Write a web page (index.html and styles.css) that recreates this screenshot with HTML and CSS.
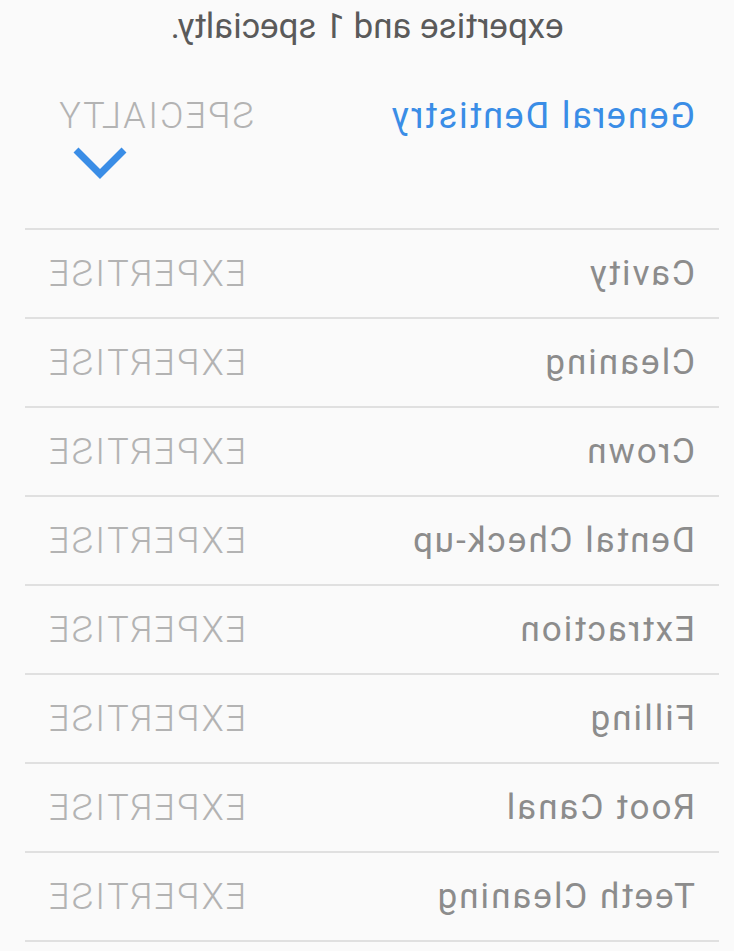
FILE: index.html
```html
<!DOCTYPE html>
<html lang="en">
<head>
    <meta charset="UTF-8">
    <meta name="viewport" content="width=device-width, initial-scale=1.0">
    <title>Expertise</title>
    <link rel="stylesheet" href="styles.css">
</head>
<body>
    <div class="page">
        <p class="intro">expertise and 1 specialty.</p>

        <div class="specialty">
            <span class="specialty-name">General Dentistry</span>
            <div class="specialty-tag">
                <span class="tag">SPECIALTY</span>
                <svg class="chevron" width="56" height="34" viewBox="0 0 56 34">
                    <polyline points="4,4 28,28 52,4" fill="none" stroke="#3a8de6" stroke-width="7"/>
                </svg>
            </div>
        </div>

        <ul class="list">
            <li><span class="name">Cavity</span><span class="tag">EXPERTISE</span></li>
            <li><span class="name">Cleaning</span><span class="tag">EXPERTISE</span></li>
            <li><span class="name">Crown</span><span class="tag">EXPERTISE</span></li>
            <li><span class="name">Dental Check-up</span><span class="tag">EXPERTISE</span></li>
            <li><span class="name">Extraction</span><span class="tag">EXPERTISE</span></li>
            <li><span class="name">Filling</span><span class="tag">EXPERTISE</span></li>
            <li><span class="name">Root Canal</span><span class="tag">EXPERTISE</span></li>
            <li><span class="name">Teeth Cleaning</span><span class="tag">EXPERTISE</span></li>
        </ul>
    </div>
</body>
</html>
```

FILE: styles.css
```css
body {
    margin: 0;
    background-color: #fafafa;
    font-family: Roboto, "Noto Sans", sans-serif;
}
/* the screen is shown mirrored */
.page {
    transform: scaleX(-1);
    height: 951px;
    overflow: hidden;
}
.intro {
    margin: 0;
    padding-top: 7px;
    font-size: 35px;
    line-height: 40px;
    color: #5a5a5a;
    text-align: center;
}
.specialty {
    display: flex;
    justify-content: space-between;
    padding: 49px 57px 0 39px;
    height: 181px;
    box-sizing: border-box;
}
.specialty-name {
    font-size: 36px;
    line-height: 40px;
    letter-spacing: 1.8px;
    color: #3a8de6;
}
.specialty-tag {
    display: flex;
    flex-direction: column;
    align-items: flex-end;
}
.chevron {
    display: block;
    margin: 10px 15px 0 0;
}
.tag {
    font-size: 36px;
    font-weight: 300;
    line-height: 40px;
    letter-spacing: 2.2px;
    color: #b3b3b3;
}
.list {
    list-style: none;
    margin: 0 25px 0 15px;
    padding: 0;
    border-top: 2px solid #e0e0e0;
}
.list li {
    display: flex;
    justify-content: space-between;
    align-items: center;
    height: 87px;
    padding: 0 22px 0 24px;
    border-bottom: 2px solid #e0e0e0;
}
.name {
    font-size: 35px;
    letter-spacing: 2px;
    color: #8c8c8c;
}
```
